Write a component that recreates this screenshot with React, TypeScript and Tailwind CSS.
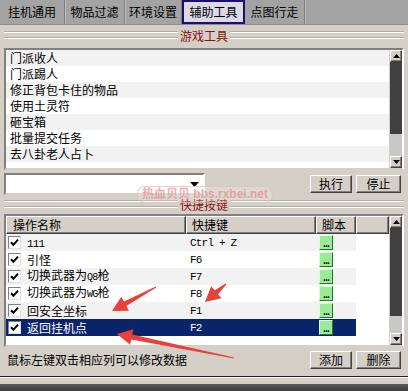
import React from "react";

// win2k style helpers
const raised =
  "bg-[#d4d0c8] border border-t-white border-l-white border-r-[#404040] border-b-[#404040] shadow-[inset_-1px_-1px_0_#808080]";
const sunken =
  "border-2 border-t-[#808080] border-l-[#808080] border-r-white border-b-[#d4d0c8]";

const tools = ["门派收人", "门派踢人", "修正背包卡住的物品", "使用土灵符", "砸宝箱", "批量提交任务", "去八卦老人占卜"];

type Hot = { name: React.ReactNode; key: string };

const hotkeys: Hot[] = [
  { name: <span className="font-['Liberation_Mono',monospace] text-[11px] tracking-[-0.8px]">111</span>, key: "Ctrl + Z" },
  { name: "引怪", key: "F6" },
  {
    name: (
      <>
        切换武器为<span className="font-['Liberation_Mono',monospace] text-[10px] tracking-[-0.8px]">Q8</span>枪
      </>
    ),
    key: "F7",
  },
  {
    name: (
      <>
        切换武器为<span className="font-['Liberation_Mono',monospace] text-[10px] tracking-[-0.8px]">WG</span>枪
      </>
    ),
    key: "F8",
  },
  { name: "回安全坐标", key: "F1" },
  { name: "返回挂机点", key: "F2" },
];

const Arrow = ({ up }: { up: boolean }) => (
  <svg width="7" height="4" viewBox="0 0 7 4">
    {up ? <path d="M0 4 L3.5 0 L7 4 Z" fill="#000" /> : <path d="M0 0 L3.5 4 L7 0 Z" fill="#000" />}
  </svg>
);

function ScrollBar({ thumbClass, restClass }: { thumbClass: string; restClass: string }) {
  return (
    <div className="w-[13px] flex flex-col bg-[#c8c8c8] border-l border-[#d4d0c8]">
      <div className={`h-[12px] flex items-center justify-center ${raised}`}>
        <Arrow up />
      </div>
      <div className={`${thumbClass} bg-[#404040]`} />
      <div className={`${restClass} bg-[#c8c8c8]`} />
      <div className={`h-[12px] flex items-center justify-center ${raised}`}>
        <Arrow up={false} />
      </div>
    </div>
  );
}

function GroupTitle({ text }: { text: string }) {
  return (
    <div className="flex items-center h-[17px]">
      <div className="flex-1 h-[7px] border-y border-white shadow-[0_-1px_0_#b0aca4,inset_0_-1px_0_#b0aca4]" />
      <span className="px-[2px] text-[12px] leading-[17px] text-[#8b1010]">{text}</span>
      <div className="flex-1 h-[7px] border-y border-white shadow-[0_-1px_0_#b0aca4,inset_0_-1px_0_#b0aca4]" />
    </div>
  );
}

function Check() {
  return (
    <div className="w-[13px] h-[13px] bg-white border border-t-[#808080] border-l-[#808080] border-r-[#e0e0e0] border-b-[#e0e0e0] flex items-center justify-center">
      <svg width="9" height="9" viewBox="0 0 9 9">
        <path d="M1 4.2 L3.4 6.8 L8 1.6" stroke="#000" strokeWidth="2" fill="none" />
      </svg>
    </div>
  );
}

function GreenBtn() {
  return (
    <div className="ml-[3px] w-[14px] h-[15px] bg-[#98ec98] border border-t-[#d8ffd8] border-l-[#d8ffd8] border-r-[#1f7a1f] border-b-[#1f7a1f] flex items-end justify-center pb-[2px]">
      <span className="text-[9px] leading-[6px] font-bold tracking-[-1px] text-black">...</span>
    </div>
  );
}

// tapered red annotation arrow
function RedArrow({ tip, tail }: { tip: [number, number]; tail: [number, number] }) {
  const [tx, ty] = tip;
  const [sx, sy] = tail;
  const dx = sx - tx;
  const dy = sy - ty;
  const len = Math.hypot(dx, dy);
  const ux = dx / len;
  const uy = dy / len;
  const nx = -uy;
  const ny = ux;
  const head = 15;
  const hw = 8;
  const bx = tx + ux * head;
  const by = ty + uy * head;
  const pts = [
    [tx, ty],
    [bx + nx * hw, by + ny * hw],
    [bx + nx * 2.5, by + ny * 2.5],
    [sx + nx * 0.5, sy + ny * 0.5],
    [sx - nx * 0.5, sy - ny * 0.5],
    [bx - nx * 2.5, by - ny * 2.5],
    [bx - nx * hw, by - ny * hw],
  ]
    .map((p) => p.join(","))
    .join(" ");
  return <polygon points={pts} fill="#e8413a" />;
}

export default function App() {
  const tabs = [
    { t: "挂机通用", w: "w-[65px]" },
    { t: "物品过滤", w: "w-[60px]" },
    { t: "环境设置", w: "w-[57px]" },
    { t: "辅助工具", w: "w-[63px]", sel: true },
    { t: "点图行走", w: "w-[60px]" },
  ];

  return (
    <div className="relative w-[408px] h-[391px] overflow-hidden bg-[#d4d0c8] text-black font-['Noto_Sans_CJK_SC','Noto_Sans',sans-serif] text-[12px]">
      {/* tab strip */}
      <div className="flex h-[25px] bg-[#a3a3a3] border-b border-[#8c8c8c]">
        {tabs.map((tab) =>
          tab.sel ? (
            <div
              key={tab.t}
              className={`${tab.w} flex items-center justify-center bg-[#dcd8e6] border-2 border-[#1c0e6e] text-[12px]`}
            >
              {tab.t}
            </div>
          ) : (
            <div
              key={tab.t}
              className={`${tab.w} flex items-center justify-center border-r border-[#7c7c7c] shadow-[1px_0_0_#bdbdbd] text-[12px]`}
            >
              {tab.t}
            </div>
          )
        )}
      </div>

      <div className="px-[4px] pt-[2px]">
        <GroupTitle text="游戏工具" />

        {/* tool list */}
        <div className={`mt-[4px] h-[122px] flex bg-white ${sunken}`}>
          <div className="flex-1 flex flex-col">
            {tools.map((t, i) => (
              <div
                key={t}
                className={`h-[16px] leading-[16px] pl-[4px] ${i % 2 === 0 ? "bg-[#f2f2f2]" : "bg-white"}`}
              >
                {t}
              </div>
            ))}
          </div>
          <ScrollBar thumbClass="h-[72px]" restClass="flex-1" />
        </div>

        {/* combo + buttons */}
        <div className="mt-[3px] flex items-start h-[22px]">
          <div className={`w-[201px] h-[22px] bg-white flex items-center justify-end pr-[4px] ${sunken}`}>
            <svg width="9" height="5" viewBox="0 0 9 5">
              <path d="M0 0 L4.5 5 L9 0 Z" fill="#000" />
            </svg>
          </div>
          <div className="flex-1" />
          <button className={`mt-[2px] w-[42px] h-[18px] text-[12px] leading-[16px] ${raised}`}>执行</button>
          <button className={`mt-[2px] ml-[4px] w-[45px] h-[18px] text-[12px] leading-[16px] ${raised}`}>停止</button>
          <div className="w-[3px]" />
        </div>

        <div className="mt-[1px]">
          <GroupTitle text="快捷按键" />
        </div>

        {/* hotkey table */}
        <div className={`mt-[1px] h-[133px] flex bg-white ${sunken}`}>
          <div className="flex-1 flex flex-col">
            <div className="flex h-[18px] bg-[#d4d0c8]">
              <div className={`w-[180px] pl-[6px] leading-[15px] text-[12px] ${raised}`}>操作名称</div>
              <div className={`w-[130px] pl-[5px] leading-[15px] text-[12px] ${raised}`}>快捷键</div>
              <div className={`w-[40px] pl-[5px] leading-[15px] text-[12px] ${raised}`}>脚本</div>
              <div className={`flex-1 ${raised}`} />
            </div>
            {hotkeys.map((h, i) => {
              const sel = i === hotkeys.length - 1;
              const bg = sel ? "bg-[#0a246a] text-white" : i % 2 === 0 ? "bg-[#f2f2f2]" : "bg-white";
              return (
                <div key={i} className="flex h-[17px]">
                  <div className={`w-[350px] flex items-center ${bg}`}>
                    <div className="w-[180px] flex items-center pl-[2px]">
                      <Check />
                      <span className="ml-[6px] leading-[16px] text-[12px]">{h.name}</span>
                    </div>
                    <div className="w-[130px] pl-[4px] font-['Liberation_Mono',monospace] text-[11px] tracking-[-0.8px] leading-[16px]">
                      {h.key}
                    </div>
                    <div className="w-[40px] flex items-center">
                      <GreenBtn />
                    </div>
                  </div>
                  <div className="flex-1" />
                </div>
              );
            })}
          </div>
          <ScrollBar thumbClass="h-[88px]" restClass="flex-1" />
        </div>

        {/* footer */}
        <div className="mt-[4px] flex items-start h-[19px]">
          <span className="pl-[3px] text-[12px] leading-[17px]">鼠标左键双击相应列可以修改数据</span>
          <div className="flex-1" />
          <button className={`w-[42px] h-[18px] text-[12px] leading-[16px] ${raised}`}>添加</button>
          <button className={`ml-[4px] w-[45px] h-[18px] text-[12px] leading-[16px] ${raised}`}>删除</button>
          <div className="w-[3px]" />
        </div>
      </div>

      {/* window bottom edge */}
      <div className="mt-[6px] h-[1px] bg-[#202020]" />
      <div className="h-[1px] bg-white" />
      <div className="h-[6px]" />
      <div className="h-[8px] bg-gradient-to-b from-[#5a5a5a] to-[#3a3a3a]" />

      {/* watermark */}
      <div className="absolute left-[137px] top-[186px] h-[17px] px-[4px] rounded-[8px] border border-[#e8b8b8]/70 bg-white/20 flex items-center">
        <span className="text-[12px] font-bold leading-[15px] text-[#e68a8a]/70 font-['Liberation_Sans','Noto_Sans_CJK_SC',sans-serif]">
          热血贝贝 bbs.rxbei.net
        </span>
      </div>

      {/* red annotation arrows */}
      <svg className="absolute inset-0 pointer-events-none" width="408" height="391">
        <RedArrow tip={[112, 311]} tail={[156, 287]} />
        <RedArrow tip={[117, 334]} tail={[234, 358]} />
        <RedArrow tip={[205, 302]} tail={[226, 284]} />
      </svg>
    </div>
  );
}
